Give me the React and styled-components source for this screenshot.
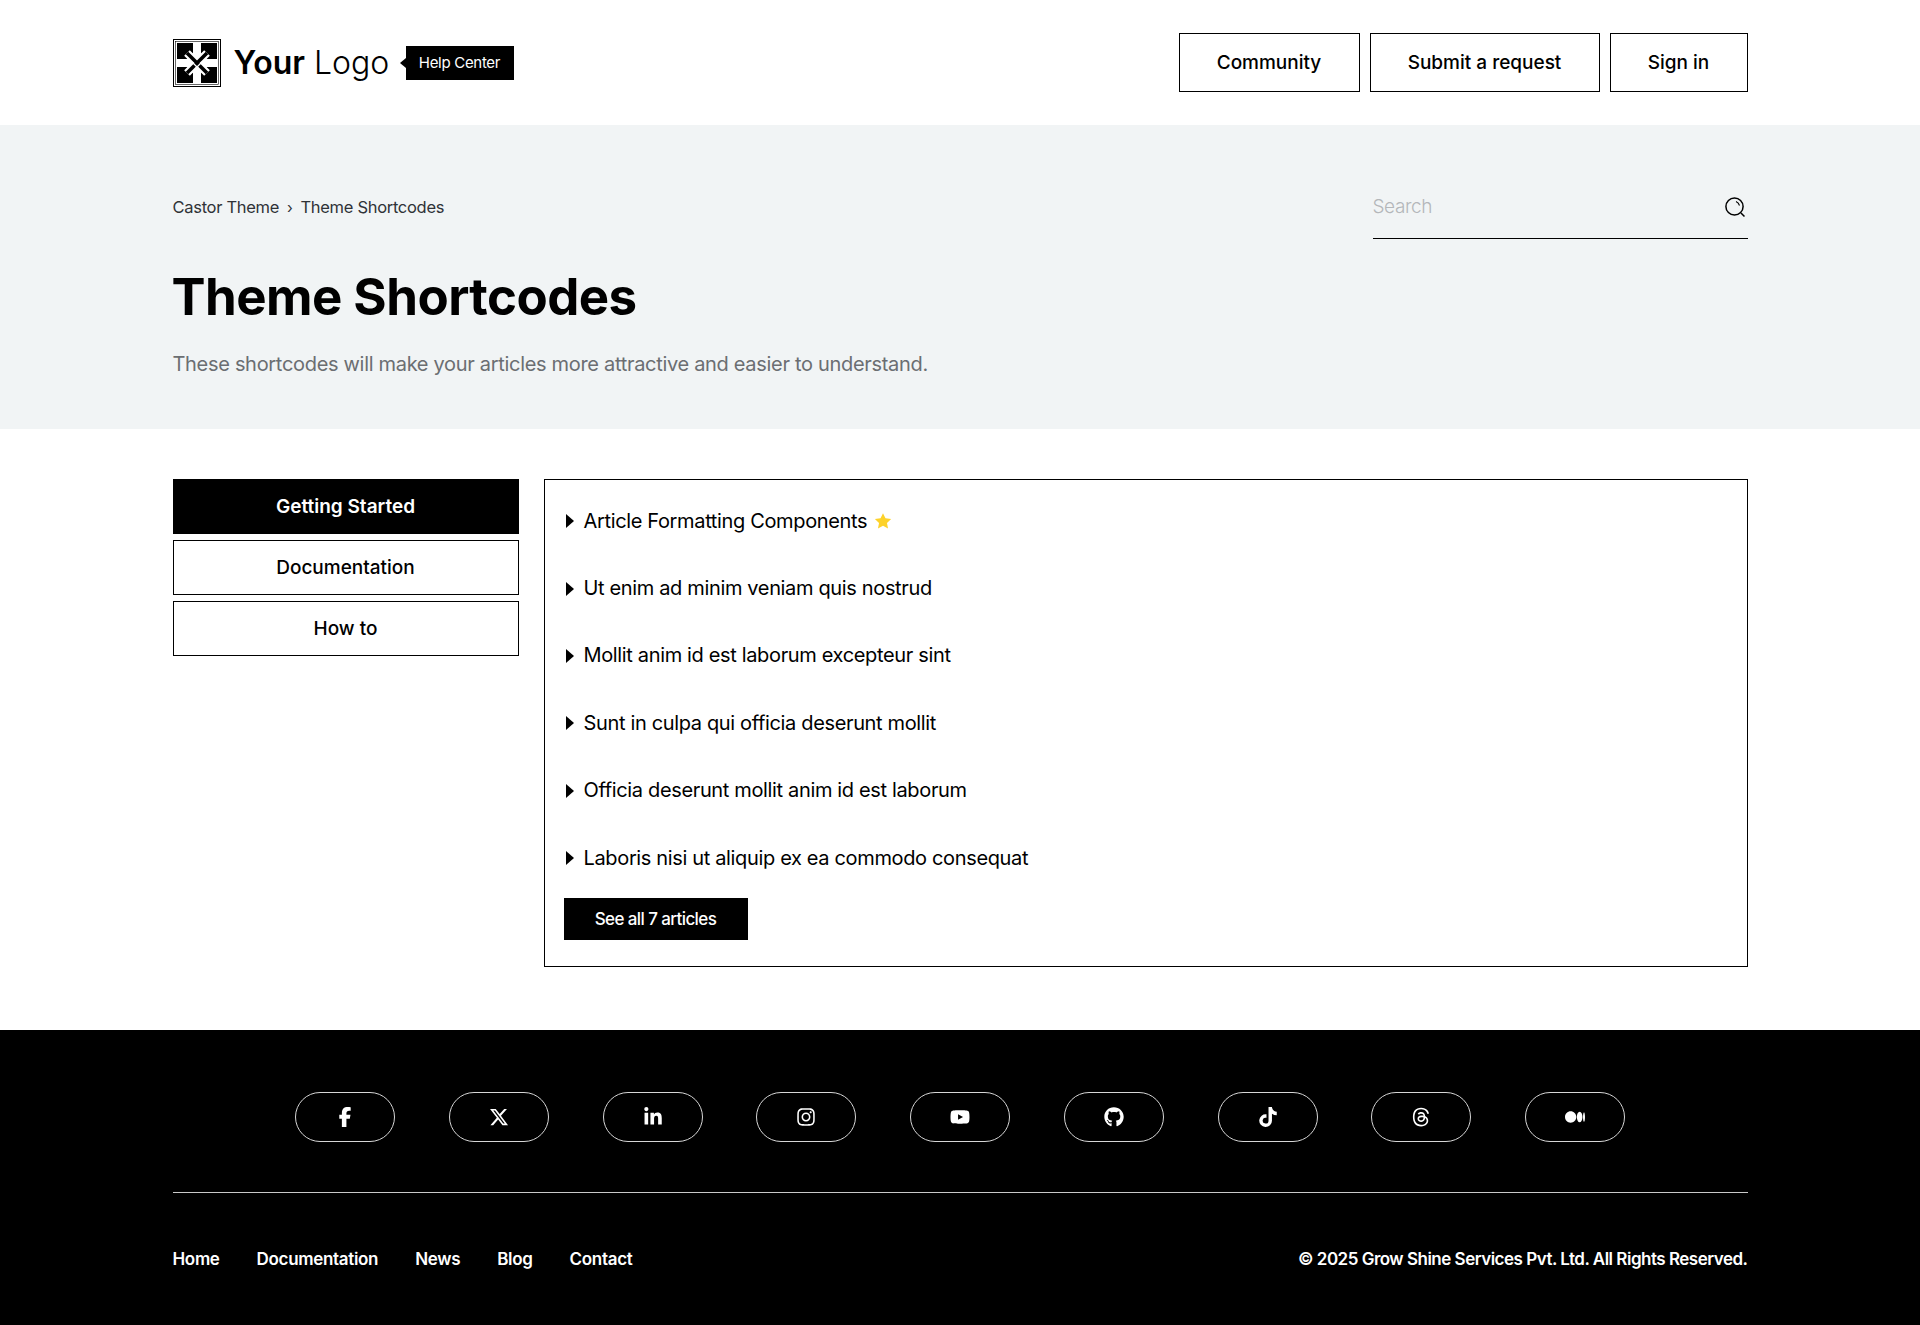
import React from "react";
import styled, { createGlobalStyle } from "styled-components";
import { FaFacebookF, FaXTwitter, FaLinkedinIn, FaInstagram, FaYoutube, FaGithub, FaTiktok, FaThreads, FaMedium } from "react-icons/fa6";

const Global = createGlobalStyle`
  html, body { margin: 0; padding: 0; background: #fff; }
  body { font-family: Inter, "Noto Sans", sans-serif; color: #000; }
  * { box-sizing: border-box; }
`;
const Container = styled.div`width: 1575px; margin: 0 auto;`;
const Header = styled.header`height: 125px; background: #fff;`;
const HeaderRow = styled(Container)`height: 125px; display: flex; align-items: center; justify-content: space-between;`;
const Brand = styled.div`display: flex; align-items: center;`;
const LogoText = styled.div`font-size: 32px; margin-left: 13px; letter-spacing: 0; line-height: 1; width: 153px; white-space: nowrap;
  b { font-weight: 600; } span { font-weight: 300; }`;
const Badge = styled.div`position: relative; margin-left: 19px; background: #000; color: #fff; height: 34px; width: 108px; display: flex; align-items: center; justify-content: center; padding-bottom: 1px; font-size: 15px; letter-spacing: -0.3px;
  &::before { content: ""; position: absolute; left: -6px; top: 12px; border-style: solid; border-width: 5px 6px 5px 0; border-color: transparent #000 transparent transparent; }`;
const Nav = styled.nav`display: flex; gap: 10px;`;
const NavBtn = styled.a`height: 59px; width: ${p => p.$w}px; border: 1px solid #000; display: flex; align-items: center; justify-content: center; font-size: 19px; font-weight: 500;`;
const Hero = styled.section`height: 304px; background: #f1f4f5;`;
const HeroInner = styled(Container)`padding-top: 52px;`;
const HeroTop = styled.div`display: flex; justify-content: space-between; align-items: flex-start; height: 62px;`;
const Crumbs = styled.div`display: flex; align-items: center; height: 60px; font-size: 16.5px; letter-spacing: -0.3px; color: #2f3237;
  span.sep { margin: 0 8px; font-size: 15px; }`;
const Search = styled.div`width: 375px; height: 62px; border-bottom: 1px solid #000; display: flex; align-items: center; justify-content: space-between; padding: 0 2px 2px 0; font-size: 19px; font-weight: 300; color: #b4b7ba; letter-spacing: -0.4px;`;
const Title = styled.h1`margin: 27px 0 0 -1px; font-size: 51px; line-height: 62px; font-weight: 700; letter-spacing: -0.55px; color: #000;`;
const Sub = styled.p`margin: 21px 0 0; font-size: 20px; line-height: 30px; color: #6b6e72; letter-spacing: -0.31px;`;
const Main = styled(Container)`display: flex; gap: 25px; padding-top: 50px; height: 601px;`;
const Side = styled.aside`width: 346px; display: flex; flex-direction: column; gap: 6px;`;
const SideBtn = styled.a`height: 55px; display: flex; align-items: center; justify-content: center; font-size: 19px; border: 1px solid #000; background: ${p => p.$active ? "#000" : "#fff"}; color: ${p => p.$active ? "#fff" : "#000"}; font-weight: ${p => p.$active ? 600 : 500};`;
const Panel = styled.div`flex: 1; height: 488px; border: 1px solid #000; padding: 7px 20px 0 21px;`;
const Item = styled.div`height: 67.4px; display: flex; align-items: center; font-size: 20px; letter-spacing: -0.35px; color: #000;
  &::before { content: ""; margin-right: 10px; margin-top: 1px; border-style: solid; border-width: 7px 0 7px 8px; border-color: transparent transparent transparent #000; }`;
const Star = styled.svg`width: 18px; height: 18px; margin-left: 7px;`;
const SeeAll = styled.a`display: flex; margin-top: 7px; margin-left: -2px; width: 184px; height: 42px; background: #000; color: #fff; align-items: center; justify-content: center; font-size: 17px; font-weight: 500; letter-spacing: -0.6px;`;
const Footer = styled.footer`height: 295px; background: #000; color: #fff;`;
const Socials = styled.div`display: flex; justify-content: space-between; padding: 62px 122.5px 0; height: 163px; border-bottom: 1px solid #c9c9c9;`;
const Social = styled.a`width: 100px; height: 50px; border: 1px solid #d6d6d6; border-radius: 25px; display: flex; align-items: center; justify-content: center; font-size: 20px; color: #fff;`;
const Bottom = styled.div`display: flex; justify-content: space-between; align-items: center; height: 131px; font-size: 17px; font-weight: 600;`;
const Links = styled.div`display: flex; gap: 37px; letter-spacing: -0.32px;`;
const Copy = styled.span`letter-spacing: -0.5px;`;

const Logo = () => (
  <svg width="48" height="48" viewBox="0 0 48 48">
    <rect x="0.5" y="0.5" width="47" height="47" fill="#fff" stroke="#000" />
    <rect x="2.5" y="2.5" width="43" height="43" fill="none" stroke="#000" strokeWidth="0.6" />
    <g fill="#000">
      <path d="M4 4H20V14L14 20H4Z" />
      <path d="M44 4H28V14L34 20H44Z" />
      <path d="M4 44H20V34L14 28H4Z" />
      <path d="M44 44H28V34L34 28H44Z" />
    </g>
    <g fill="none" strokeLinecap="butt">
      <path d="M14 14L34 34M34 14L14 34" stroke="#fff" strokeWidth="8" />
      <path d="M14 14L34 34M34 14L14 34" stroke="#000" strokeWidth="3.6" />
      <path d="M19 23L25 29M23 29L29 23" stroke="#fff" strokeWidth="1.3" />
    </g>
  </svg>
);
const SearchIcon = () => (
  <svg width="22" height="22" viewBox="0 0 22 22" fill="none" stroke="#000" strokeWidth="1.5">
    <circle cx="10.5" cy="10.5" r="8.6" />
    <path d="M12 5.5A6 6 0 0 1 15.5 9.5" strokeWidth="1.1" />
    <path d="M17 17L20.5 20.5" />
  </svg>
);
const items = ["Ut enim ad minim veniam quis nostrud", "Mollit anim id est laborum excepteur sint", "Sunt in culpa qui officia deserunt mollit", "Officia deserunt mollit anim id est laborum", "Laboris nisi ut aliquip ex ea commodo consequat"];
const socials = [FaFacebookF, FaXTwitter, FaLinkedinIn, FaInstagram, FaYoutube, FaGithub, FaTiktok, FaThreads, FaMedium];

export default function App() {
  return (
    <>
      <Global />
      <Header>
        <HeaderRow>
          <Brand>
            <Logo />
            <LogoText><b>Your</b> <span>Logo</span></LogoText>
            <Badge>Help Center</Badge>
          </Brand>
          <Nav>
            <NavBtn $w={181}>Community</NavBtn>
            <NavBtn $w={230}>Submit a request</NavBtn>
            <NavBtn $w={138}>Sign in</NavBtn>
          </Nav>
        </HeaderRow>
      </Header>
      <Hero>
        <HeroInner>
          <HeroTop>
            <Crumbs>Castor Theme<span className="sep">›</span>Theme Shortcodes</Crumbs>
            <Search>Search<SearchIcon /></Search>
          </HeroTop>
          <Title>Theme Shortcodes</Title>
          <Sub>These shortcodes will make your articles more attractive and easier to understand.</Sub>
        </HeroInner>
      </Hero>
      <Main>
        <Side>
          <SideBtn $active>Getting Started</SideBtn>
          <SideBtn>Documentation</SideBtn>
          <SideBtn>How to</SideBtn>
        </Side>
        <Panel>
          <Item>Article Formatting Components
            <Star viewBox="0 0 24 24" fill="#fdd22a"><path d="M12 1.5l3.3 6.9 7.5 1-5.5 5.2 1.4 7.5L12 18.4l-6.7 3.7 1.4-7.5L1.2 9.4l7.5-1z" /></Star>
          </Item>
          {items.map(t => <Item key={t}>{t}</Item>)}
          <SeeAll>See all 7 articles</SeeAll>
        </Panel>
      </Main>
      <Footer>
        <Container>
          <Socials>
            {socials.map((I, i) => <Social key={i}><I /></Social>)}
          </Socials>
          <Bottom>
            <Links><span>Home</span><span>Documentation</span><span>News</span><span>Blog</span><span>Contact</span></Links>
            <Copy>© 2025 Grow Shine Services Pvt. Ltd. All Rights Reserved.</Copy>
          </Bottom>
        </Container>
      </Footer>
    </>
  );
}
